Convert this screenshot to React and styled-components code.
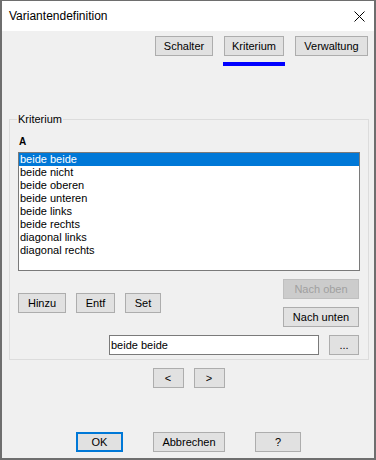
import React from 'react'
import styled, { createGlobalStyle } from 'styled-components'

const Global = createGlobalStyle`
  html, body {
    margin: 0;
    padding: 0;
    background: #ffffff;
  }
  body {
    font-family: 'Liberation Sans', Arial, sans-serif;
    font-size: 11px;
  }
`

const Window = styled.div`
  box-sizing: border-box;
  width: 376px;
  height: 460px;
  display: flex;
  flex-direction: column;
  border-style: solid;
  border-color: #6e6e6e;
  border-width: 1px 2px 2px 2px;
  background: #f0f0f0;
`

const TitleBar = styled.div`
  height: 30px;
  flex: none;
  display: flex;
  align-items: center;
  justify-content: space-between;
  padding: 0 9px 0 7px;
  background: #ffffff;
  font-size: 12px;
  color: #000;
`

const Body = styled.div`
  flex: 1;
  display: flex;
  flex-direction: column;
  padding: 5px 0 6px;
`

const TabRow = styled.div`
  display: flex;
  justify-content: flex-end;
  align-items: flex-start;
  gap: 10px;
  padding-right: 6px;
`

const Tab = styled.div`
  display: flex;
  flex-direction: column;
  align-items: center;
`

const Indicator = styled.div`
  width: 62px;
  height: 4px;
  margin-top: 6px;
  background: #0000ff;
`

const Button = styled.button`
  box-sizing: border-box;
  width: ${p => p.$w}px;
  height: 20px;
  padding: 0;
  margin: 0;
  display: flex;
  align-items: center;
  justify-content: center;
  font-family: 'Liberation Sans', Arial, sans-serif;
  font-size: 11px;
  color: ${p => (p.disabled ? '#a0a0a0' : '#000')};
  background: ${p => (p.disabled ? '#cccccc' : '#e1e1e1')};
  border: ${p => (p.$primary ? '2px solid #0078d7' : p.disabled ? '1px solid #bfbfbf' : '1px solid #adadad')};
  border-radius: 0;
  flex: none;
`

const Group = styled.fieldset`
  min-width: 0;
  margin: 47px 5px 0 7px;
  padding: 0 8px 4px 8px;
  border: 1px solid #dcdcdc;
`

const Legend = styled.legend`
  margin-left: -1px;
  padding: 0 1px;
  line-height: 13px;
  color: #000;
`

const ColLabel = styled.div`
  margin-top: 10px;
  padding-left: 1px;
  font-size: 10px;
  font-weight: bold;
  line-height: 12px;
  color: #000;
`

const ListBox = styled.div`
  box-sizing: border-box;
  margin-top: 4px;
  height: 119px;
  border: 1px solid #7a7a7a;
  background: #fff;
  display: flex;
  flex-direction: column;
`

const Item = styled.div`
  height: 13px;
  line-height: 13px;
  padding-left: 1px;
  color: ${p => (p.$selected ? '#fff' : '#000')};
  background: ${p => (p.$selected ? '#0078d7' : 'transparent')};
  white-space: nowrap;
`

const Controls = styled.div`
  margin-top: 8px;
  display: flex;
  justify-content: space-between;
  align-items: center;
  padding-right: 1px;
`

const ButtonRow = styled.div`
  display: flex;
  gap: ${p => p.$gap || 10}px;
  justify-content: ${p => p.$justify || 'flex-start'};
`

const ButtonColumn = styled.div`
  display: flex;
  flex-direction: column;
  gap: 8px;
`

const InputRow = styled.div`
  margin-top: 8px;
  display: flex;
  justify-content: flex-end;
  gap: 10px;
  padding-right: 1px;
`

const TextInput = styled.input`
  box-sizing: border-box;
  width: 210px;
  height: 20px;
  margin: 0;
  padding: 0 0 0 1px;
  border: 1px solid #7a7a7a;
  background: #fff;
  font-family: 'Liberation Sans', Arial, sans-serif;
  font-size: 11px;
  color: #000;
  outline: none;
`

const NavRow = styled(ButtonRow)`
  margin-top: 8px;
  padding-left: 1px;
`

const Footer = styled(ButtonRow)`
  margin-top: auto;
  padding-left: 1px;
`

const CloseIcon = () =>
  <svg width='11' height='11' viewBox='0 0 11 11'>
    <path d='M0.5 0.5 L10.5 10.5 M10.5 0.5 L0.5 10.5' stroke='#000' strokeWidth='1' fill='none' />
  </svg>

const items = [
  'beide beide',
  'beide nicht',
  'beide oberen',
  'beide unteren',
  'beide links',
  'beide rechts',
  'diagonal links',
  'diagonal rechts'
]

const App = () =>
  <>
    <Global />
    <Window>
      <TitleBar>
        <span>Variantendefinition</span>
        <CloseIcon />
      </TitleBar>
      <Body>
        <TabRow>
          <Tab><Button $w={58}>Schalter</Button></Tab>
          <Tab>
            <Button $w={60}>Kriterium</Button>
            <Indicator />
          </Tab>
          <Tab><Button $w={73}>Verwaltung</Button></Tab>
        </TabRow>
        <Group>
          <Legend>Kriterium</Legend>
          <ColLabel>A</ColLabel>
          <ListBox>
            {items.map((t, i) => <Item key={t} $selected={i === 0}>{t}</Item>)}
          </ListBox>
          <Controls>
            <ButtonRow>
              <Button $w={48}>Hinzu</Button>
              <Button $w={39}>Entf</Button>
              <Button $w={36}>Set</Button>
            </ButtonRow>
            <ButtonColumn>
              <Button $w={76} disabled>Nach oben</Button>
              <Button $w={76}>Nach unten</Button>
            </ButtonColumn>
          </Controls>
          <InputRow>
            <TextInput defaultValue='beide beide' />
            <Button $w={30}>...</Button>
          </InputRow>
        </Group>
        <NavRow $justify='center'>
          <Button $w={31}>&lt;</Button>
          <Button $w={31}>&gt;</Button>
        </NavRow>
        <Footer $justify='center' $gap={30}>
          <Button $w={47} $primary>OK</Button>
          <Button $w={72}>Abbrechen</Button>
          <Button $w={46}>?</Button>
        </Footer>
      </Body>
    </Window>
  </>

export default App
